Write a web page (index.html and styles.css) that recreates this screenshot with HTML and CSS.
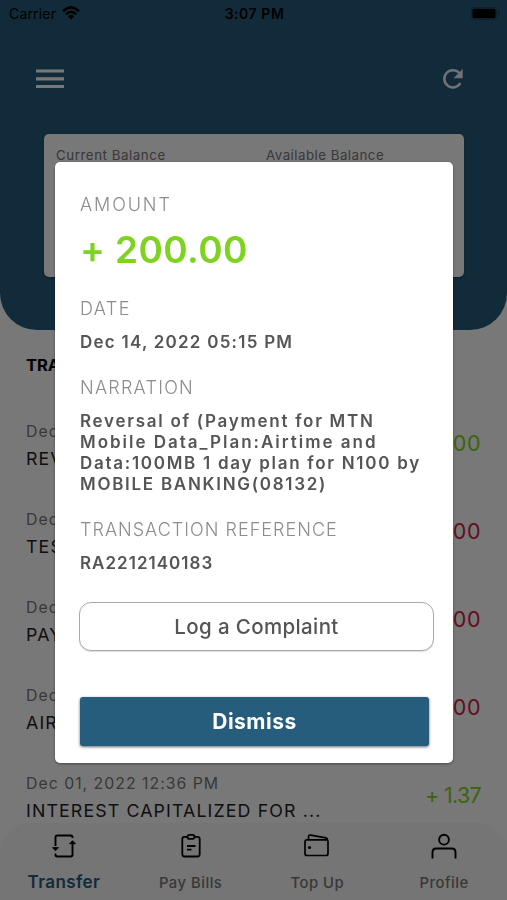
FILE: index.html
```html
<!DOCTYPE html>
<html lang="en">
<head>
<meta charset="utf-8">
<title>Transaction details</title>
<link rel="stylesheet" href="styles.css">
</head>
<body>
<div class="screen">
  <header class="header">
    <div class="status">
      <div class="carrier"><span>Carrier</span>
        <svg width="18" height="14" viewBox="0 0 18 14"><g fill="none" stroke="#000" stroke-width="2.7"><path d="M1 5.2Q9-2.4 17 5.2"/><path d="M4 8.3Q9 3.6 14 8.3"/></g><path d="M9 13.6 5.9 10.4Q9 7.8 12.1 10.4Z"/></svg>
      </div>
      <span class="clock">3:07 PM</span>
      <div class="battery"><svg width="29" height="13" viewBox="0 0 29 13"><rect x=".5" y=".5" width="25" height="12" rx="3" fill="none" stroke="#000" stroke-opacity=".25"/><rect x="1.500" y="1.800" width="23" height="9.500" rx="1.5"/><path d="M27 4.500v4q1.600-.5 1.600-2t-1.600-2" fill-opacity=".3"/></svg></div>
    </div>
    <div class="toolbar">
      <svg width="28" height="20" viewBox="0 0 28 20"><path d="M0 2h28M0 9.800h28M0 17.500h28" stroke="#fff" stroke-width="3.200"/></svg>
      <svg width="22" height="22" viewBox="0 0 22 22"><path d="M18.300 15.200A8.600 8.600 0 1 1 17.300 5" fill="none" stroke="#f5effa" stroke-width="2.500"/><path d="M20.700 1v9.300h-9.200z" fill="#f5effa"/></svg>
    </div>
    <div class="balances">
      <span class="current">Current Balance</span>
      <span class="available">Available Balance</span>
    </div>
  </header>
  <main class="history">
    <h2>TRANSACTIONS</h2>
    <div class="row"><div><p class="when">Dec 14</p><p class="what">REVE</p></div><span class="sum in">200.00</span></div>
    <div class="row"><div><p class="when">Dec 14</p><p class="what">TEST</p></div><span class="sum out">100.00</span></div>
    <div class="row"><div><p class="when">Dec 14</p><p class="what">PAYM</p></div><span class="sum out">100.00</span></div>
    <div class="row"><div><p class="when">Dec 14</p><p class="what">AIRT</p></div><span class="sum out">100.00</span></div>
    <div class="row"><div><p class="when">Dec 01, 2022 12:36 PM</p><p class="what">INTEREST CAPITALIZED FOR ...</p></div><span class="sum in small">+ 1.37</span></div>
  </main>
  <nav class="tabs">
    <a class="tab active"><svg width="26" height="26" viewBox="0 0 26 26" fill="none" stroke="#000" stroke-width="1.900"><path d="M4.500 13V4.200q0-1.700 1.700-1.700h13.600q1.700 0 1.700 1.700V5M4.500 20.500v1.300q0 1.700 1.700 1.700h13.600q1.700 0 1.700-1.700V11"/><path d="M1.600 14.700h5.800l-2.900 3zM18.600 10.700h5.800l-2.900-3z" fill="#000" stroke-width="1"/></svg><span>Transfer</span></a>
    <a class="tab"><svg width="26" height="26" viewBox="0 0 26 26" fill="none" stroke="#000" stroke-width="1.800"><path d="M9.500 3.800H6.500q-2.200 0-2.200 2.200v15.300q0 2.200 2.200 2.200h13q2.200 0 2.200-2.200V6q0-2.200-2.200-2.200h-3"/><rect x="9.500" y="1.900" width="7" height="3.900" rx="1.900"/><path d="M9 13h8.500M9 16.700h4.500"/></svg><span>Pay Bills</span></a>
    <a class="tab"><svg width="26" height="26" viewBox="0 0 26 26" fill="none" stroke="#000" stroke-width="1.700"><path d="M3 6.800h19q2 0 2 2v11.700q0 2-2 2H3q-2 0-2-2V8.800q0-2 2-2zM4.500 6.500V4q0-2.200 2.200-1.900l15.200 2.700q1.600.3 1.600 2"/><circle cx="5.500" cy="14.500" r="1.600" fill="#000" stroke="none"/></svg><span>Top Up</span></a>
    <a class="tab"><svg width="26" height="26" viewBox="0 0 26 26" fill="none" stroke="#000" stroke-width="1.900"><circle cx="13" cy="6.700" r="4.900"/><path d="M1.500 25.500v-6.300q0-3.700 3.700-3.700h15.600q3.700 0 3.700 3.700v6.300"/></svg><span>Profile</span></a>
  </nav>
</div>

<div class="backdrop">
  <section class="dialog" role="dialog">
    <div class="label amount-label">AMOUNT</div>
    <div class="amount">+ 200.00</div>
    <div class="label date-label">DATE</div>
    <div class="value date">Dec 14, 2022 05:15 PM</div>
    <div class="label">NARRATION</div>
    <div class="value">Reversal of (Payment for MTN<br><span class="wide">Mobile Data_Plan:Airtime and</span><br>Data:100MB 1 day plan for N100 by<br>MOBILE BANKING(08132)</div>
    <div class="label ref-label">TRANSACTION REFERENCE</div>
    <div class="value ref">RA2212140183</div>
    <button class="complaint">Log a Complaint</button>
    <button class="dismiss">Dismiss</button>
  </section>
</div>
</body>
</html>
```

FILE: styles.css
```css
* { box-sizing: border-box; }
body { margin: 0; font-family: Inter, "Open Sans", sans-serif; color: #000; background: #fff; }
h2, p { margin: 0; }
svg { display: block; }
.screen { width: 507px; height: 900px; display: flex; flex-direction: column; overflow: hidden; }

.header { height: 330px; flex: none; background: #265c7c; border-radius: 0 0 37px 37px; }
.status { display: grid; grid-template-columns: 1fr auto 1fr; align-items: center; height: 27px; padding: 0 7px 0 9px; font-size: 14px; }
.carrier { display: flex; gap: 6px; align-items: center; letter-spacing: .18px; }
.carrier svg { margin-top: -1px; }
.clock { font-weight: 600; letter-spacing: .55px; }
.battery { justify-self: end; }
.toolbar { display: flex; justify-content: space-between; align-items: center; height: 24px; margin: 40px 0 43px; padding: 0 43px 0 36px; }
.balances { width: 420px; height: 143px; margin: 0 44px; border-radius: 5px; background: #fff; display: grid; grid-template-columns: 210px 1fr; padding: 12px; font-size: 13.3px; line-height: 19px; color: #777; box-shadow: 0 1px 3px #0005; }
.current { letter-spacing: .56px; }
.available { letter-spacing: .48px; }

.history { flex: none; height: 493px; padding: 25px 26px 0; }
.history h2 { font-size: 16.5px; font-weight: 700; line-height: 20px; margin-bottom: 48px; }
.row { display: flex; justify-content: space-between; height: 48px; margin-bottom: 40px; }
.when { font-size: 15.8px; line-height: 18px; letter-spacing: 1.02px; color: #777; }
.what { font-size: 17.8px; line-height: 22px; margin-top: 7px; letter-spacing: 1.12px; color: #222; }
.sum { font-size: 21.5px; line-height: 40px; letter-spacing: .5px; }
.sum.small { letter-spacing: -.7px; }
.in { color: #7ed321; }
.out { color: #d0213f; }

.tabs { display: grid; grid-template-columns: repeat(4, 1fr); height: 77px; border-radius: 30px 30px 0 0; background: #f8f8f8; }
.tab { display: flex; flex-direction: column; align-items: center; padding: 10px 0 0 1px; gap: 14px; font-size: 14.8px; font-weight: 500; line-height: 20px; letter-spacing: .5px; color: #777; }
.tab.active { font-size: 17px; font-weight: 600; letter-spacing: .4px; color: #265c7c; gap: 13px; }

.backdrop { position: fixed; inset: 0; background: rgba(0, 0, 0, .53); display: flex; justify-content: center; align-items: flex-start; padding-top: 162px; }
.dialog { width: 398px; height: 601px; margin-left: 1px; padding: 33.2px 19px 16px 25px; border-radius: 5px; background: #fff; box-shadow: 0 1px 3px #0006; }
.label { font-size: 18px; line-height: 20px; letter-spacing: 1.25px; color: #8c8c8c; margin-top: 26px; font-weight: 300; }
.amount-label { margin-top: 0; letter-spacing: 1.9px; }
.date-label { letter-spacing: 1.4px; }
.ref-label { letter-spacing: 1.02px; }
.amount { margin-top: 12.5px; margin-bottom: 27px; font-size: 37px; line-height: 44px; font-weight: 600; letter-spacing: .4px; color: #7ed321; }
.value { margin-top: 13px; font-size: 17px; line-height: 20.75px; font-weight: 600; letter-spacing: 1.72px; color: #555; white-space: nowrap; }
.wide { letter-spacing: 1.98px; }
.date { letter-spacing: 1.24px; }
.ref { letter-spacing: 1.02px; }
button { display: block; font-family: inherit; padding: 0; }
.complaint { width: 355px; height: 49px; margin: 28.3px 0 0 -1px; border: 1.5px solid #aaa; border-radius: 12px; background: #fff; font-size: 20.5px; font-weight: 500; letter-spacing: .37px; color: #555; box-shadow: 0 1px 1px #0002; }
.dismiss { width: 349px; height: 49px; margin-top: 46px; border: 0; border-radius: 3px; background: #265c7c; color: #fff; font-size: 21px; font-weight: 700; letter-spacing: .5px; box-shadow: 0 1px 3px #0009; }
```
